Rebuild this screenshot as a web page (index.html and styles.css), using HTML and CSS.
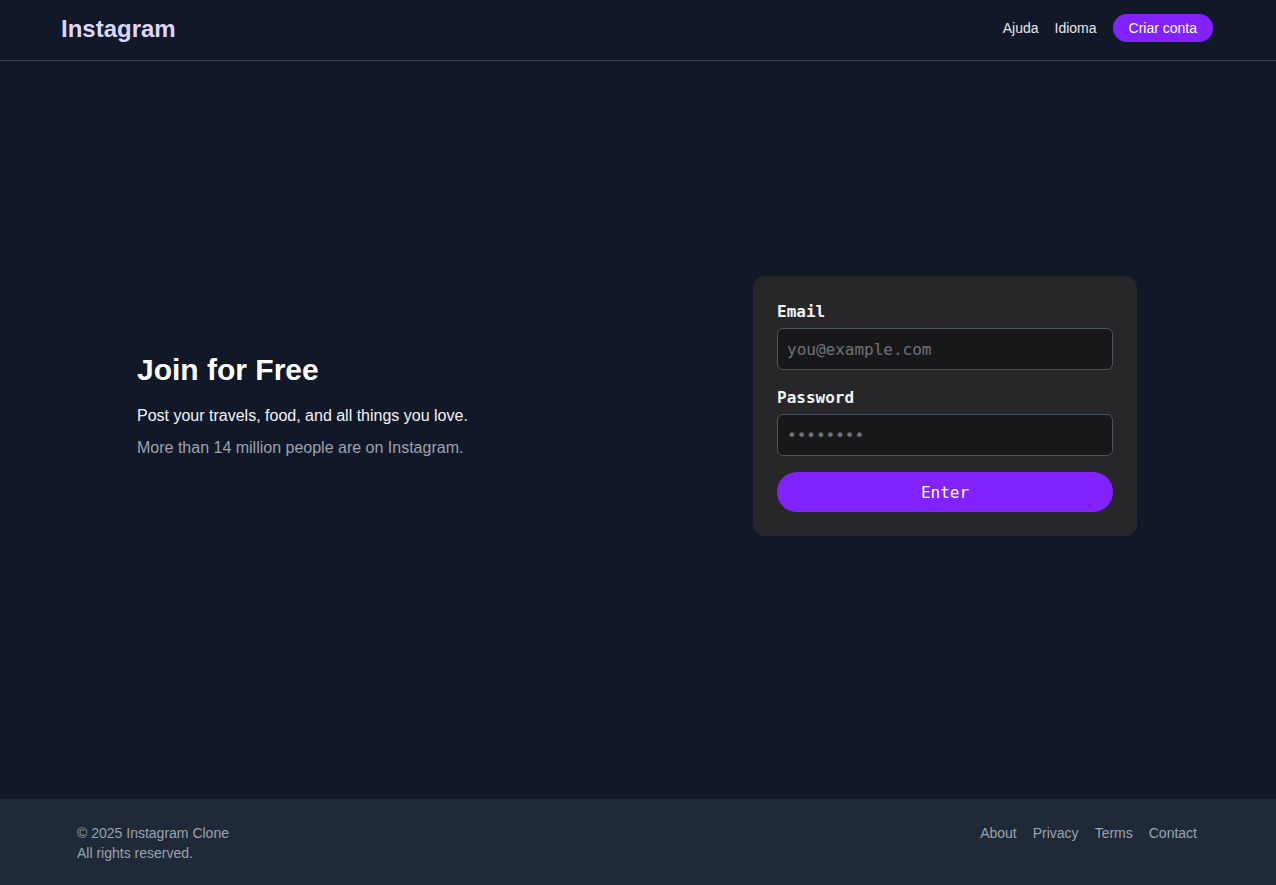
FILE: index.html
```html
<!DOCTYPE html>
<html lang="pt">
<head>
<meta charset="utf-8">
<title>Instagram</title>
<link rel="stylesheet" href="styles.css">
</head>
<body>
<div class="page">
  <header class="header">
    <div class="header-inner">
      <a class="logo" href="#">Instagram</a>
      <nav class="nav">
        <a href="#" class="nav-link">Ajuda</a>
        <a href="#" class="nav-link">Idioma</a>
        <a href="#" class="nav-btn">Criar conta</a>
      </nav>
    </div>
  </header>
  <main class="main">
    <div class="hero">
      <div class="hero-text">
        <h1 class="hero-title">Join for Free</h1>
        <p class="hero-sub">Post your travels, food, and all things you love.</p>
        <p class="hero-muted">More than 14 million people are on Instagram.</p>
      </div>
      <form class="card">
        <label class="label" for="email">Email</label>
        <input class="input" id="email" type="email" placeholder="you@example.com">
        <label class="label label-gap" for="pw">Password</label>
        <input class="input input-pw" id="pw" type="password" value="12345678">
        <button class="submit" type="button">Enter</button>
      </form>
    </div>
  </main>
  <footer class="footer">
    <div class="footer-inner">
      <div class="copy">
        <div>© 2025 Instagram Clone</div>
        <div>All rights reserved.</div>
      </div>
      <nav class="footer-links">
        <a href="#">About</a>
        <a href="#">Privacy</a>
        <a href="#">Terms</a>
        <a href="#">Contact</a>
      </nav>
    </div>
  </footer>
</div>
</body>
</html>
```
FILE: styles.css
```css
* { box-sizing: border-box; }
html, body { margin: 0; padding: 0; }
body {
  background: #111827;
  color: #f3f4f6;
  font-family: "Liberation Sans", Arial, sans-serif;
}
a { text-decoration: none; color: inherit; }
.page {
  min-height: 885px;
  display: flex;
  flex-direction: column;
}
.header {
  border-bottom: 1px solid #374151;
}
.header-inner {
  max-width: 1152px;
  margin: 0 calc((100% - 1152px) / 2 + 1px) 0 calc((100% - 1152px) / 2 - 1px);
  height: 60px;
  display: flex;
  align-items: center;
  justify-content: space-between;
}
.logo {
  font-size: 24px;
  font-weight: 700;
  color: #dcd7ff;
  line-height: 32px;
  margin-top: -3px;
}
.nav {
  display: flex;
  align-items: center;
  gap: 16px;
  font-size: 14px;
  margin-top: -4px;
}
.nav-link { color: #e5e7eb; line-height: 20px; }
.nav-btn {
  background: #8122ff;
  color: #fff;
  border-radius: 9999px;
  padding: 4px 16px;
  line-height: 20px;
}
.main {
  flex: 1;
  display: flex;
  align-items: center;
  padding: 1px 0 49px;
}
.hero {
  width: 1024px;
  margin: 0 calc((100% - 1024px) / 2 + 1px) 0 calc((100% - 1024px) / 2 - 1px);
  padding: 0 12px;
  display: grid;
  grid-template-columns: 1fr 1fr;
  align-items: center;
}
.hero-title {
  margin: 0;
  font-size: 30px;
  line-height: 36px;
  font-weight: 700;
  color: #fff;
}
.hero-sub {
  margin: 16px 0 0;
  font-size: 16px;
  line-height: 24px;
  color: #f3f4f6;
}
.hero-muted {
  margin: 8px 0 0;
  font-size: 16px;
  line-height: 24px;
  color: #9ca3af;
}
.card {
  justify-self: end;
  width: 384px;
  background: #27272a;
  border-radius: 12px;
  padding: 24px;
  display: flex;
  flex-direction: column;
  font-family: "DejaVu Sans Mono", "Liberation Mono", monospace;
}
.label {
  font-size: 16px;
  line-height: 24px;
  font-weight: 700;
  color: #f4f4f5;
}
.label-gap { margin-top: 16px; }
.input {
  margin-top: 4px;
  height: 42px;
  background: #18181b;
  border: 1px solid #4b5563;
  border-radius: 6px;
  padding: 0 9px;
  font-family: inherit;
  font-size: 16px;
  color: #9ca3af;
  outline: none;
}
.input::placeholder { color: #71717a; }
.input-pw { color: #71717a; font-size: 16px; }
.submit {
  margin-top: 16px;
  height: 40px;
  border: 0;
  border-radius: 9999px;
  background: #8122ff;
  color: #fff;
  font-family: inherit;
  font-size: 16px;
  cursor: pointer;
}
.footer {
  background: #1f2937;
  padding: 24px 0 22px;
}
.footer-inner {
  max-width: 1152px;
  margin: 0 calc((100% - 1152px) / 2 + 1px) 0 calc((100% - 1152px) / 2 - 1px);
  padding: 0 16px;
  display: flex;
  justify-content: space-between;
  align-items: flex-start;
  font-size: 14px;
  line-height: 20px;
  color: #9ca3af;
}
.footer-links {
  display: flex;
  gap: 16px;
}
```
